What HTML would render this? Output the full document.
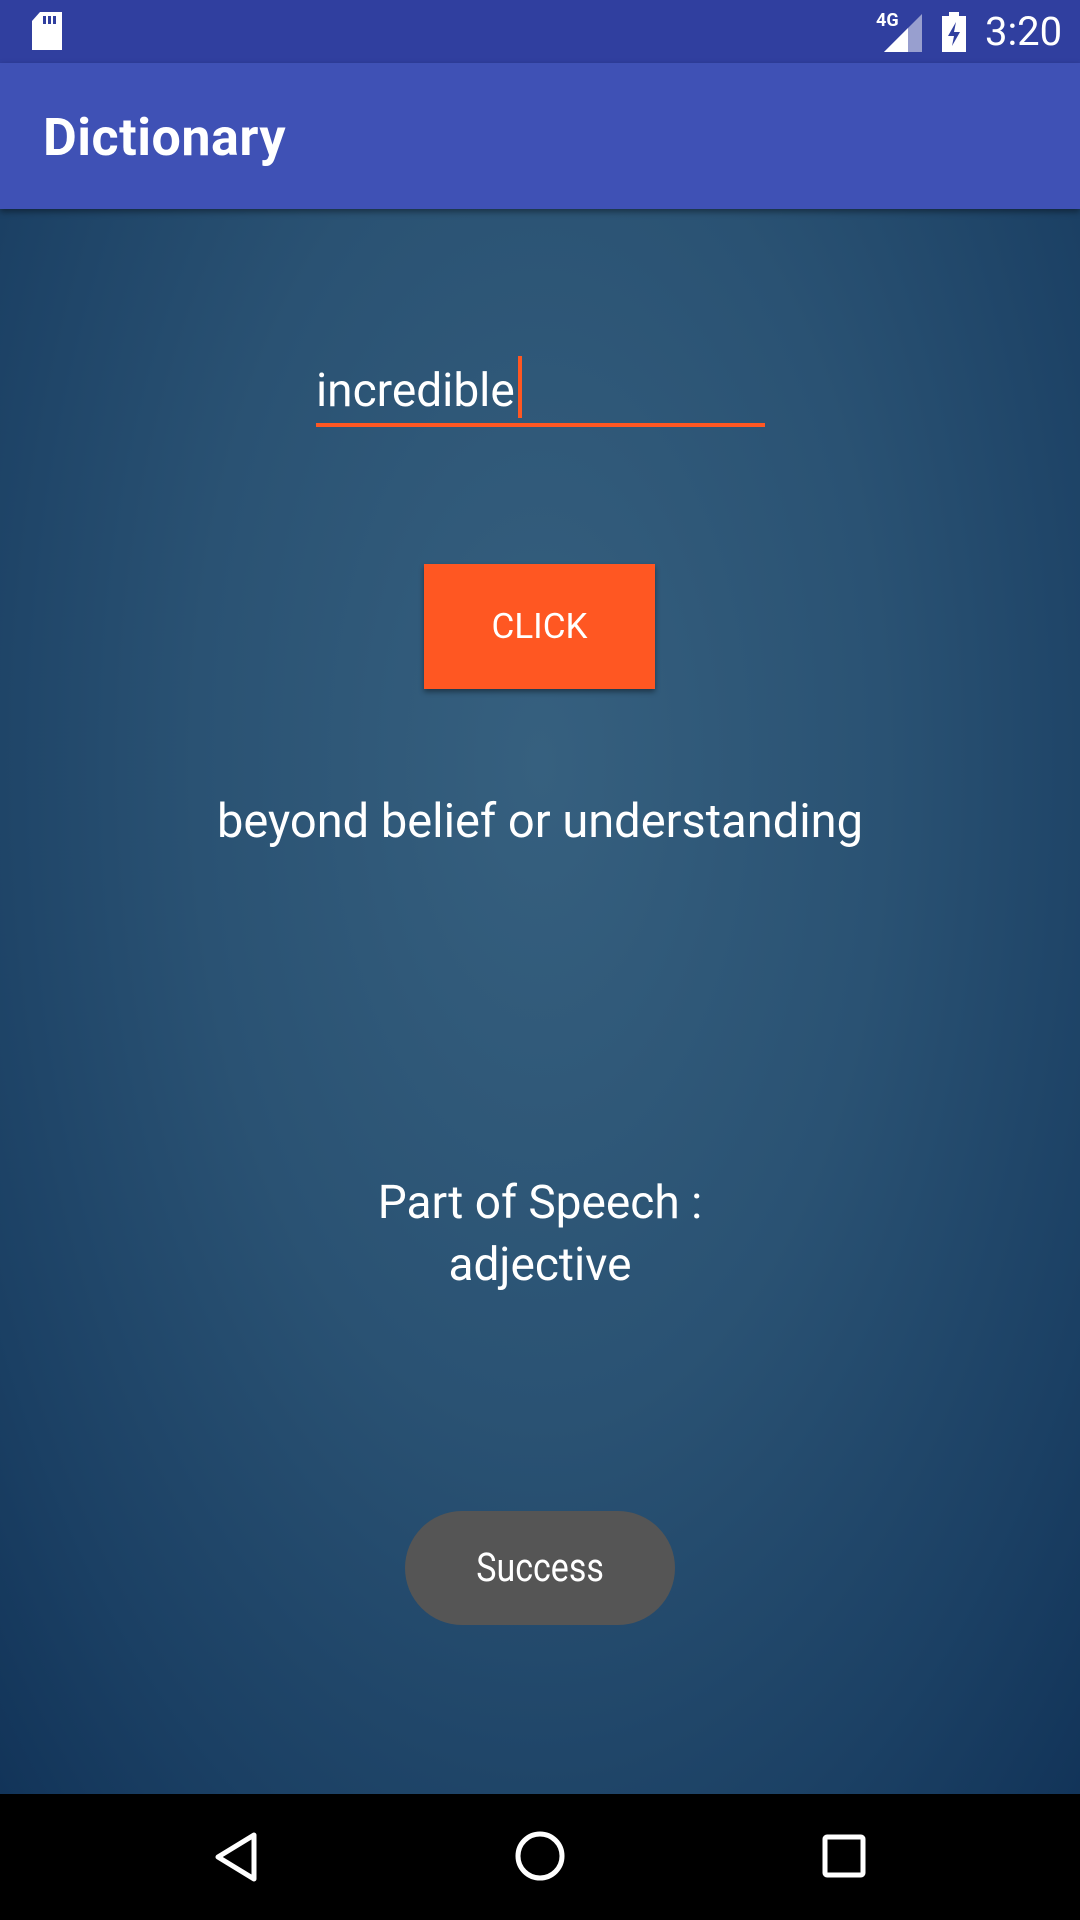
<!DOCTYPE html>
<html><head><meta charset="utf-8"><style>
*{margin:0;padding:0;box-sizing:border-box}
body{width:1080px;height:1920px;position:relative;overflow:hidden;font-family:"Roboto","Liberation Sans",sans-serif;background:#000}
.sb{position:absolute;left:0;top:0;width:1080px;height:63px;background:#303F9F}
.ab{position:absolute;left:0;top:63px;width:1080px;height:146px;background:#3F51B5;box-shadow:0 3px 6px rgba(0,0,0,.4);z-index:2}
.ab span{position:absolute;left:43px;top:44px;color:#fff;font-size:52px;font-weight:bold;letter-spacing:0.5px}
.bg{position:absolute;left:0;top:209px;width:1080px;height:1585px;background:radial-gradient(ellipse at 50% 35%,#36607f 0%,#2a5273 45%,#1b4064 80%,#123459 100%)}
.t{position:absolute;color:#fff;text-align:center;width:1080px;left:0}
</style></head><body>
<div class="sb">
<svg style="position:absolute;left:32px;top:12px" width="32" height="38"><path d="M8 0H30V38H0V9Z" fill="#fff"/><rect x="11" y="4" width="3" height="8" fill="#303F9F"/><rect x="16" y="4" width="3" height="8" fill="#303F9F"/><rect x="21" y="4" width="3" height="8" fill="#303F9F"/></svg>
<div style="position:absolute;left:876px;top:10px;color:#fff;font-size:18px;font-weight:bold">4G</div>
<svg style="position:absolute;left:884px;top:14px" width="38" height="38"><path d="M38 0V38H0Z" fill="#fff" opacity=".5"/><path d="M24 14V38H0Z" fill="#fff"/></svg>
<svg style="position:absolute;left:942px;top:12px" width="24" height="40"><rect x="7" y="0" width="10" height="5" fill="#fff"/><rect x="0" y="4" width="24" height="36" fill="#fff"/><path d="M14 10L6 24H12L10 34L18 20H12Z" fill="#303F9F"/></svg>
<div style="position:absolute;left:985px;top:8px;color:#fff;font-size:40px">3:20</div>
</div>
<div class="ab"><span>Dictionary</span></div>
<div class="bg"></div>
<div style="position:absolute;left:316px;top:356px;color:#fff;font-size:46px">incredible<span style="display:inline-block;width:4px;height:62px;background:#FF5722;vertical-align:-12px;margin-left:3px"></span></div>
<div style="position:absolute;left:316px;top:423px;width:449px;height:4px;background:#FF5722"></div>
<div style="position:absolute;left:424px;top:564px;width:231px;height:125px;background:#FF5722;box-shadow:0 3px 5px rgba(0,0,0,.4);color:#fff;font-size:35px;text-align:center;line-height:125px">CLICK</div>
<div class="t" style="top:794px;font-size:47px">beyond belief or understanding</div>
<div class="t" style="top:1172px;font-size:46px;line-height:62px">Part of Speech :<br>adjective</div>
<div style="position:absolute;left:405px;top:1511px;width:270px;height:114px;border-radius:57px;background:#555;color:#fff;font-size:40px;text-align:center;line-height:114px"><span style="display:inline-block;transform:scaleX(0.85)">Success</span></div>
<div style="position:absolute;left:0;top:1794px;width:1080px;height:126px;background:#000">
<svg style="position:absolute;left:214px;top:38px" width="46" height="50"><path d="M40 3V47L4 25Z" fill="none" stroke="#fff" stroke-width="5" stroke-linejoin="round"/></svg>
<svg style="position:absolute;left:514px;top:36px" width="52" height="52"><circle cx="26" cy="26" r="22" fill="none" stroke="#fff" stroke-width="5"/></svg>
<svg style="position:absolute;left:822px;top:40px" width="44" height="44"><rect x="3" y="3" width="38" height="38" rx="2" fill="none" stroke="#fff" stroke-width="5"/></svg>
</div>
</body></html>
